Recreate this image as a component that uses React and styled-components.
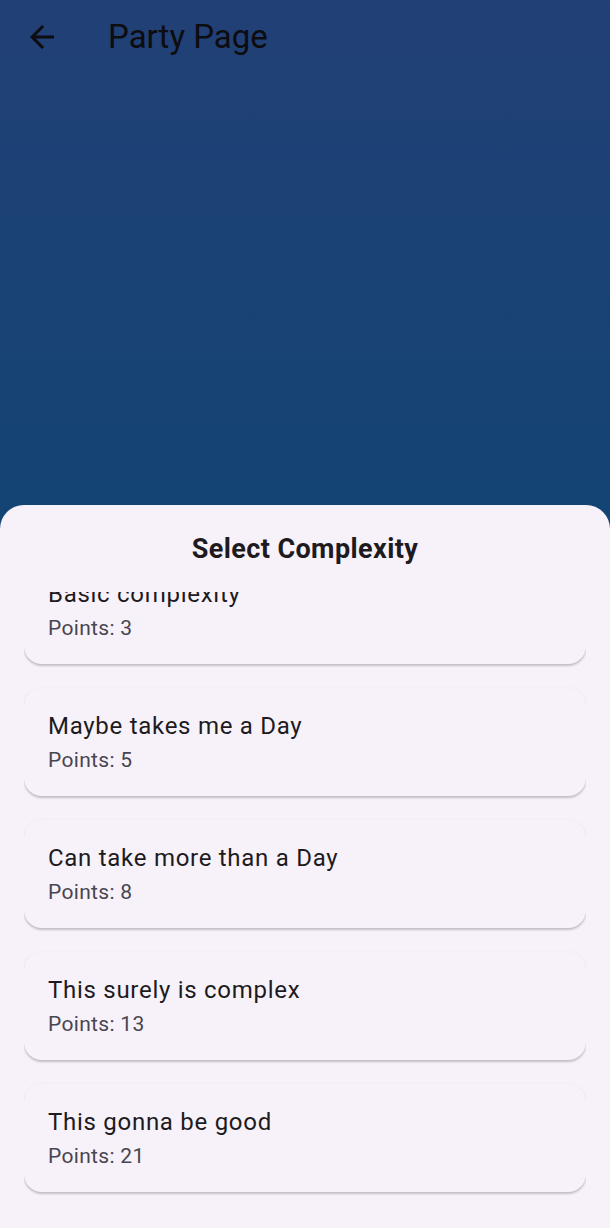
import React from "react";
import styled, { createGlobalStyle } from "styled-components";

const GlobalStyle = createGlobalStyle`
  *, *::before, *::after { box-sizing: border-box; }
  body { margin: 0; font-family: Roboto, "Liberation Sans", sans-serif; }
  button { font: inherit; }
`;

const Page = styled.div`
  display: flex;
  flex-direction: column;
  min-height: 100vh;
  background: linear-gradient(to bottom, #214076 0, #1b4275 20vh, #134473 42vh);
`;

const AppBar = styled.header`
  display: flex;
  flex: 1;
  align-items: flex-start;
  gap: 48px;
  padding: 6px 24px;
  color: #0d0c0f;
`;

const BackButton = styled.button`
  display: grid;
  place-items: center;
  flex: none;
  width: 36px;
  height: 62px;
  padding: 0;
  border: 0;
  background: none;
  color: inherit;
  cursor: pointer;
`;

const PageTitle = styled.h1`
  margin: 0;
  font-size: 33px;
  font-weight: 400;
  line-height: 62px;
`;

const Sheet = styled.section`
  padding: 24px;
  border-radius: 24px 24px 0 0;
  background: #f7f2fa;
  color: #1d1b20;
`;

const SheetTitle = styled.h2`
  margin: 0 0 22px;
  font-size: 27px;
  font-weight: 700;
  line-height: 41px;
  letter-spacing: 0.015em;
  text-align: center;
`;

/* A reversed column starts scrolled to the end of the list. */
const Scroller = styled.div`
  display: flex;
  flex-direction: column-reverse;
  height: calc(50vh - 2px);
  overflow-y: auto;
  scrollbar-width: none;
`;

const CardList = styled.ul`
  display: flex;
  flex-direction: column;
  gap: 24px;
  margin: 0;
  padding: 12px 0;
  list-style: none;
`;

const Card = styled.button`
  display: block;
  width: 100%;
  padding: 20px 24px;
  border: 0;
  border-radius: 18px;
  background: #f7f2fa;
  box-shadow: 0 2px 2px rgba(0, 0, 0, 0.18), 0 1px 4px rgba(0, 0, 0, 0.06);
  color: inherit;
  text-align: left;
  cursor: pointer;
`;

const CardTitle = styled.span`
  display: block;
  font-size: 24px;
  line-height: 36px;
  letter-spacing: 0.03em;
`;

const CardPoints = styled.span`
  display: block;
  color: #49454f;
  font-size: 21px;
  line-height: 32px;
  letter-spacing: 0.015em;
`;

const options = [
  { title: "Basic complexity", points: 3 },
  { title: "Maybe takes me a Day", points: 5 },
  { title: "Can take more than a Day", points: 8 },
  { title: "This surely is complex", points: 13 },
  { title: "This gonna be good", points: 21 },
];

export default function App() {
  return (
    <>
      <GlobalStyle />
      <Page>
        <AppBar>
          <BackButton type="button" aria-label="Back">
            <svg width="36" height="36" viewBox="0 0 24 24" fill="currentColor" aria-hidden="true">
              <path d="M20 11H7.83l5.59-5.59L12 4l-8 8 8 8 1.41-1.41L7.83 13H20v-2z" />
            </svg>
          </BackButton>
          <PageTitle>Party Page</PageTitle>
        </AppBar>
        <Sheet aria-labelledby="sheet-title">
          <SheetTitle id="sheet-title">Select Complexity</SheetTitle>
          <Scroller>
            <CardList>
              {options.map(({ title, points }) => (
                <li key={title}>
                  <Card type="button">
                    <CardTitle>{title}</CardTitle>
                    <CardPoints>Points: {points}</CardPoints>
                  </Card>
                </li>
              ))}
            </CardList>
          </Scroller>
        </Sheet>
      </Page>
    </>
  );
}
